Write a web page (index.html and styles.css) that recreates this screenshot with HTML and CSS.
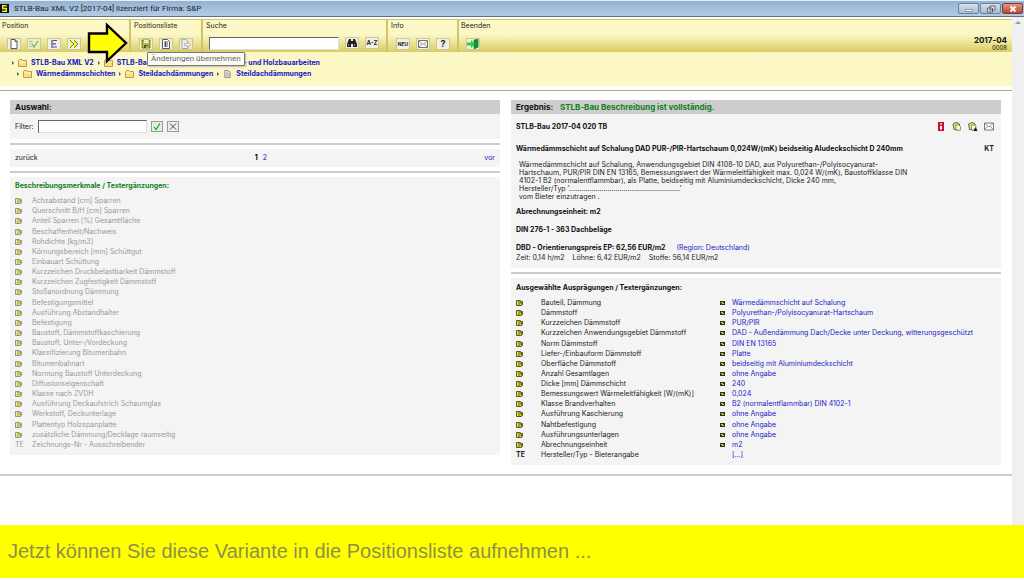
FILE: index.html
```html
<!DOCTYPE html>
<html lang="de">
<head>
    <meta charset="UTF-8">
    <meta name="viewport" content="width=device-width, initial-scale=1.0">
    <title>STLB-Bau XML V2</title>
    <link rel="stylesheet" href="styles.css">
</head>
<body>
    <svg class="defs" aria-hidden="true">
        <symbol id="folder" viewBox="0 0 9 8">
            <path d="M.5 7.500V1.500L1.500.5H4l1 1h3.500v6z" fill="#f6df86" stroke="#b08a2c" stroke-width=".8"/>
            <path d="M1.200 3h6.600" fill="none" stroke="#fff7c8"/>
        </symbol>
        <symbol id="sheet" viewBox="0 0 7 9">
            <path d="M.5.5h4l2 2v6h-6z" fill="#ddd" stroke="#888"/>
            <path d="M2 3.500h3M2 5h3M2 6.500h3" stroke="#999" stroke-width=".6"/>
        </symbol>
        <symbol id="item" viewBox="0 0 7 6">
            <path d="M.5.5h4v1h2v3h-1v1h-5z" fill="#e9e83a" stroke="#4a4a10" stroke-width=".9"/>
            <path d="M3 1v4M4.500 2.500h1v1h-1" fill="none" stroke="#33330a" stroke-width=".8"/>
        </symbol>
        <symbol id="mark" viewBox="0 0 5 4">
            <path d="M0 0h5v4H0z" fill="#2e3312"/>
            <path d="M1 1h2v1h1v1H2V2H1z" fill="#c9cf5a"/>
        </symbol>
        <symbol id="mail" viewBox="0 0 10 8">
            <path d="M.5.5h9v7h-9z" fill="#fff" stroke="#555" stroke-width=".8"/>
            <path d="M1 1l4 3.500L9 1M1 7l2.500-3M9 7L6.500 4" fill="none" stroke="#666" stroke-width=".7"/>
        </symbol>
        <symbol id="copy" viewBox="0 0 9 9">
            <path d="M.5 2L2.500 1l1-.6 2 .6L7 2v6L1.500 7.500z" fill="#e3dc62" stroke="#4b4b1c" stroke-width=".8"/>
            <path d="M3.500 3h3l1.500 1.500V8H3.500z" fill="#fbf9d8" stroke="#555" stroke-width=".6"/>
        </symbol>
    </svg>

    <header class="titlebar">
        <svg class="logo" viewBox="0 0 10 10"><path d="M0 0h10v10H0z" fill="#111"/><path d="M7.500 2H3v3h4v3H2.300" fill="none" stroke="#f4ee1c" stroke-width="1.600"/></svg>
        <h1>STLB-Bau XML V2 [2017-04] lizenziert für Firma: S&amp;P</h1>
        <div class="win-btns">
            <button type="button" aria-label="Minimieren"><svg viewBox="0 0 10 8"><path d="M1.500 4.500h7v2h-7z" fill="#fff" stroke="#667" stroke-width=".6"/></svg></button>
            <button type="button" aria-label="Verkleinern"><svg viewBox="0 0 10 8"><path d="M4 1h5v4H4zM1.500 3h5v4h-5z" fill="#eef3f9" stroke="#445" stroke-width=".8"/><path d="M3.300 4.500h1.500v1H3.300z" fill="#556"/></svg></button>
            <button type="button" class="close" aria-label="Schließen"><svg viewBox="0 0 10 8"><path d="M2.500 1.500l5 5m0-5l-5 5" stroke="#fff" stroke-width="1.800"/></svg></button>
        </div>
    </header>

    <div class="window">
        <div class="page">
            <div class="toolbar">
                <div class="group position">
                    <span>Position</span>
                    <div class="btns">
                        <button type="button" aria-label="Neu"><svg viewBox="0 0 12 10"><path d="M3 .5h4l2 2v7H3zM7 .5v2h2" fill="#fff" stroke="#333" stroke-width=".8"/></svg></button>
                        <button type="button" aria-label="Prüfen" class="off"><svg viewBox="0 0 12 10"><path d="M1.500 2.500h3M1.500 5h2M1.500 7.500h2" stroke="#9b9" /><path d="M4 5l2 3 4-6" fill="none" stroke="#6cb56c" stroke-width="1.300"/></svg></button>
                        <button type="button" aria-label="Struktur"><svg viewBox="0 0 12 10"><path d="M3 1h2v8H3z" fill="#88a"/><path d="M5 1.500h4M5 4.800h3M5 8h4" stroke="#4a4ab0" stroke-width="1.200"/></svg></button>
                        <button type="button" aria-label="Weiter"><svg viewBox="0 0 12 10"><path d="M2 1l4 4-4 4M6 1l4 4-4 4" fill="#eef03a" stroke="#6d8a1c"/></svg></button>
                    </div>
                    <svg class="pointer" viewBox="0 0 42 44"><path d="M2 12.500h18V4l19 18-19 18v-9H2z" fill="#ff0" stroke="#000" stroke-width="2.400"/></svg>
                </div>
                <div class="group liste">
                    <span>Positionsliste</span>
                    <div class="btns">
                        <button type="button" aria-label="Änderungen übernehmen"><svg viewBox="0 0 12 10"><path d="M2 1h8v8H2z" fill="#b5bd2c" stroke="#5c6414" stroke-width=".8"/><path d="M4 1h4.500v3H4z" fill="#eef0d0"/><path d="M4 6h4v3H4z" fill="#55601a"/><path d="M6.500 7h1v2h-1z" fill="#fff"/></svg></button>
                        <button type="button" aria-label="Liste"><svg viewBox="0 0 12 10"><path d="M2.500.5h5l2 2v7h-7z" fill="#fff" stroke="#333" stroke-width=".8"/><path d="M4 3h4M4 5h4M4 7h4M5.500 3v5" stroke="#333" stroke-width=".8"/></svg></button>
                        <button type="button" aria-label="Export" class="off"><svg viewBox="0 0 12 10"><path d="M2 .5h4l2 2v7H2z" fill="#eee" stroke="#999" stroke-width=".8"/><path d="M4.500 4.500h3V3L10.500 5.500 7.500 8V6.500h-3z" fill="#fff" stroke="#999" stroke-width=".7"/></svg></button>
                    </div>
                    <div class="tip" role="tooltip">Änderungen übernehmen</div>
                </div>
                <div class="group suche">
                    <label for="suche">Suche</label>
                    <div class="btns">
                        <input type="text" id="suche">
                        <button type="button" aria-label="Suchen"><svg viewBox="0 0 12 10"><path d="M3 1h2v2h2V1h2l2 5v3H7V6H5v3H1V6z" fill="#222"/><path d="M2.500 6v2M8.500 6v2" stroke="#aaa" stroke-width=".7"/></svg></button>
                        <button type="button" class="txt">A-Z</button>
                    </div>
                </div>
                <div class="group info">
                    <span>Info</span>
                    <div class="btns">
                        <button type="button" class="txt neu">NEU</button>
                        <button type="button" aria-label="Nachricht"><svg viewBox="0 0 12 10"><use href="#mail" x="1" y="1" width="10" height="8"/></svg></button>
                        <button type="button" class="txt help">?</button>
                    </div>
                </div>
                <div class="group ende">
                    <span>Beenden</span>
                    <div class="btns">
                        <button type="button" aria-label="Beenden"><svg viewBox="0 0 12 10"><path d="M7 1l4-.7v8L7 9.700z" fill="#149a2a" stroke="#0a5c16" stroke-width=".6"/><path d="M0 3.500h4V1L8 5 4 9V6.500H0z" fill="#22d43c"/></svg></button>
                    </div>
                    <div class="version"><b>2017-04</b><small>0008</small></div>
                </div>
            </div>

            <nav class="crumbs">
                <div>
                    <i></i><svg class="ic"><use href="#folder"/></svg><a href="#">STLB-Bau XML V2</a>
                    <i></i><svg class="ic"><use href="#folder"/></svg><a href="#">STLB-Bau 2017-04 - LB 016 - Zimmer- und Holzbauarbeiten</a>
                </div>
                <div class="sub">
                    <i></i><svg class="ic"><use href="#folder"/></svg><a href="#">Wärmedämmschichten</a>
                    <i></i><svg class="ic"><use href="#folder"/></svg><a href="#">Steildachdämmungen</a>
                    <i></i><svg class="ic"><use href="#sheet"/></svg><a href="#">Steildachdämmungen</a>
                </div>
            </nav>

            <main class="cols">
                <section class="auswahl">
                    <h2>Auswahl:</h2>
                    <form class="box filter">
                        <label for="filter">Filter:</label>
                        <input type="text" id="filter">
                        <button type="button" class="ok" aria-label="Filter anwenden"><svg viewBox="0 0 10 9"><path d="M2 5l2 2.500L8 1.500" fill="none" stroke="#1c9a2c" stroke-width="1.200"/></svg></button>
                        <button type="button" aria-label="Filter löschen"><svg viewBox="0 0 10 9"><path d="M2 1.500l6 6m0-6l-6 6" stroke="#333" stroke-width=".9"/></svg></button>
                    </form>
                    <hr>
                    <div class="box pager">
                        <span>zurück</span>
                        <span><b>1</b><a href="#">2</a></span>
                        <a href="#">vor</a>
                    </div>
                    <hr>
                    <div class="box merkmale">
                        <h3>Beschreibungsmerkmale / Textergänzungen:</h3>
                        <table>
                            <tr><td><svg><use href="#item"/></svg></td><td>Achsabstand [cm] Sparren</td></tr>
                            <tr><td><svg><use href="#item"/></svg></td><td>Querschnitt B/H [cm] Sparren</td></tr>
                            <tr><td><svg><use href="#item"/></svg></td><td>Anteil Sparren [%] Gesamtfläche</td></tr>
                            <tr><td><svg><use href="#item"/></svg></td><td>Beschaffenheit/Nachweis</td></tr>
                            <tr><td><svg><use href="#item"/></svg></td><td>Rohdichte [kg/m3]</td></tr>
                            <tr><td><svg><use href="#item"/></svg></td><td>Körnungsbereich [mm] Schüttgut</td></tr>
                            <tr><td><svg><use href="#item"/></svg></td><td>Einbauart Schüttung</td></tr>
                            <tr><td><svg><use href="#item"/></svg></td><td>Kurzzeichen Druckbelastbarkeit Dämmstoff</td></tr>
                            <tr><td><svg><use href="#item"/></svg></td><td>Kurzzeichen Zugfestigkeit Dämmstoff</td></tr>
                            <tr><td><svg><use href="#item"/></svg></td><td>Stoßanordnung Dämmung</td></tr>
                            <tr><td><svg><use href="#item"/></svg></td><td>Befestigungsmittel</td></tr>
                            <tr><td><svg><use href="#item"/></svg></td><td>Ausführung Abstandhalter</td></tr>
                            <tr><td><svg><use href="#item"/></svg></td><td>Befestigung</td></tr>
                            <tr><td><svg><use href="#item"/></svg></td><td>Baustoff, Dämmstoffkaschierung</td></tr>
                            <tr><td><svg><use href="#item"/></svg></td><td>Baustoff, Unter-/Vordeckung</td></tr>
                            <tr><td><svg><use href="#item"/></svg></td><td>Klassifizierung Bitumenbahn</td></tr>
                            <tr><td><svg><use href="#item"/></svg></td><td>Bitumenbahnart</td></tr>
                            <tr><td><svg><use href="#item"/></svg></td><td>Normung Baustoff Unterdeckung</td></tr>
                            <tr><td><svg><use href="#item"/></svg></td><td>Diffusionseigenschaft</td></tr>
                            <tr><td><svg><use href="#item"/></svg></td><td>Klasse nach ZVDH</td></tr>
                            <tr><td><svg><use href="#item"/></svg></td><td>Ausführung Deckaufstrich Schaumglas</td></tr>
                            <tr><td><svg><use href="#item"/></svg></td><td>Werkstoff, Deckunterlage</td></tr>
                            <tr><td><svg><use href="#item"/></svg></td><td>Plattentyp Holzspanplatte</td></tr>
                            <tr><td><svg><use href="#item"/></svg></td><td>zusätzliche Dämmung/Decklage raumseitig</td></tr>
                            <tr><td>TE</td><td>Zeichnungs-Nr - Ausschreibender</td></tr>
                        </table>
                    </div>
                </section>

                <section class="ergebnis">
                    <h2>Ergebnis: <span>STLB-Bau Beschreibung ist vollständig.</span></h2>
                    <div class="box result">
                        <div class="line">
                            <h3>STLB-Bau 2017-04 020 TB</h3>
                            <div class="tools">
                                <svg viewBox="0 0 10 9"><path d="M2 0h6v9H2z" fill="#c8102e"/><path d="M4.200 1.200h1.600v1.600H4.200zM4 4h2v3.500H4z" fill="#fff"/></svg>
                                <svg><use href="#copy"/></svg>
                                <svg viewBox="0 0 10 9"><use href="#copy" width="9" height="9"/><path d="M5.500 9L7.500 5l2 4z" fill="#111"/></svg>
                                <svg><use href="#mail"/></svg>
                            </div>
                        </div>
                        <div class="line kurz">
                            <h3>Wärmedämmschicht auf Schalung DAD PUR-/PIR-Hartschaum 0,024W/(mK) beidseitig Aludeckschicht D 240mm</h3>
                            <b>KT</b>
                        </div>
                        <p class="lang">
                            Wärmedämmschicht auf Schalung, Anwendungsgebiet DIN 4108-10 DAD, aus Polyurethan-/Polyisocyanurat-<br>
                            Hartschaum, PUR/PIR DIN EN 13165, Bemessungswert der Wärmeleitfähigkeit max. 0,024 W/(mK), Baustoffklasse DIN<br>
                            4102-1 B2 (normalentflammbar), als Platte, beidseitig mit Aluminiumdeckschicht, Dicke 240 mm,<br>
                            Hersteller/Typ '.......................................................'<br>
                            vom Bieter einzutragen .
                        </p>
                        <h3>Abrechnungseinheit: m2</h3>
                        <h3>DIN 276-1 - 363 Dachbeläge</h3>
                        <div class="preis">
                            <h3>DBD - Orientierungspreis EP: 62,56 EUR/m2</h3>
                            <a href="#">(Region: Deutschland)</a>
                        </div>
                        <div class="zeit"><span>Zeit: 0,14 h/m2</span><span>Löhne: 6,42 EUR/m2</span><span>Stoffe: 56,14 EUR/m2</span></div>
                    </div>
                    <hr>
                    <div class="box werte">
                        <h3>Ausgewählte Ausprägungen / Textergänzungen:</h3>
                        <table>
                            <tr><td><svg><use href="#item"/></svg></td><td>Bauteil, Dämmung</td><td><svg><use href="#mark"/></svg></td><td><a href="#">Wärmedämmschicht auf Schalung</a></td></tr>
                            <tr><td><svg><use href="#item"/></svg></td><td>Dämmstoff</td><td><svg><use href="#mark"/></svg></td><td><a href="#">Polyurethan-/Polyisocyanurat-Hartschaum</a></td></tr>
                            <tr><td><svg><use href="#item"/></svg></td><td>Kurzzeichen Dämmstoff</td><td><svg><use href="#mark"/></svg></td><td><a href="#">PUR/PIR</a></td></tr>
                            <tr><td><svg><use href="#item"/></svg></td><td>Kurzzeichen Anwendungsgebiet Dämmstoff</td><td><svg><use href="#mark"/></svg></td><td><a href="#">DAD - Außendämmung Dach/Decke unter Deckung, witterungsgeschützt</a></td></tr>
                            <tr><td><svg><use href="#item"/></svg></td><td>Norm Dämmstoff</td><td><svg><use href="#mark"/></svg></td><td><a href="#">DIN EN 13165</a></td></tr>
                            <tr><td><svg><use href="#item"/></svg></td><td>Liefer-/Einbauform Dämmstoff</td><td><svg><use href="#mark"/></svg></td><td><a href="#">Platte</a></td></tr>
                            <tr><td><svg><use href="#item"/></svg></td><td>Oberfläche Dämmstoff</td><td><svg><use href="#mark"/></svg></td><td><a href="#">beidseitig mit Aluminiumdeckschicht</a></td></tr>
                            <tr><td><svg><use href="#item"/></svg></td><td>Anzahl Gesamtlagen</td><td><svg><use href="#mark"/></svg></td><td><a href="#">ohne Angabe</a></td></tr>
                            <tr><td><svg><use href="#item"/></svg></td><td>Dicke [mm] Dämmschicht</td><td><svg><use href="#mark"/></svg></td><td><a href="#">240</a></td></tr>
                            <tr><td><svg><use href="#item"/></svg></td><td>Bemessungswert Wärmeleitfähigkeit [W/(mK)]</td><td><svg><use href="#mark"/></svg></td><td><a href="#">0,024</a></td></tr>
                            <tr><td><svg><use href="#item"/></svg></td><td>Klasse Brandverhalten</td><td><svg><use href="#mark"/></svg></td><td><a href="#">B2 (normalentflammbar) DIN 4102-1</a></td></tr>
                            <tr><td><svg><use href="#item"/></svg></td><td>Ausführung Kaschierung</td><td><svg><use href="#mark"/></svg></td><td><a href="#">ohne Angabe</a></td></tr>
                            <tr><td><svg><use href="#item"/></svg></td><td>Nahtbefestigung</td><td><svg><use href="#mark"/></svg></td><td><a href="#">ohne Angabe</a></td></tr>
                            <tr><td><svg><use href="#item"/></svg></td><td>Ausführungsunterlagen</td><td><svg><use href="#mark"/></svg></td><td><a href="#">ohne Angabe</a></td></tr>
                            <tr><td><svg><use href="#item"/></svg></td><td>Abrechnungseinheit</td><td><svg><use href="#mark"/></svg></td><td><a href="#">m2</a></td></tr>
                            <tr><td>TE</td><td>Hersteller/Typ - Bieterangabe</td><td></td><td><a href="#">[...]</a></td></tr>
                        </table>
                    </div>
                </section>
            </main>
            <hr class="end">
        </div>
        <div class="scroll"><svg viewBox="0 0 12 8"><path d="M3 6l3-3 3 3z" fill="#999"/></svg></div>
    </div>

    <footer class="hint">Jetzt können Sie diese Variante in die Positionsliste aufnehmen ...</footer>
</body>
</html>
```
FILE: styles.css
```css
* {
    box-sizing: border-box;
}
body {
    margin: 0;
    min-height: 100vh;
    display: flex;
    flex-direction: column;
    padding-bottom: 2px;
    background: #fff;
    font: 7px/10px Inter, "DejaVu Sans", sans-serif;
    color: #222;
}
h1, h2, h3, p {
    margin: 0;
    font-size: 7px;
}
a {
    color: #1a1ac8;
    text-decoration: none;
}
svg {
    display: block;
}
button, input {
    margin: 0;
    padding: 0;
    font: inherit;
}
input {
    background: #fff;
    border: 1px solid #ddd;
    border-top-color: #666;
    border-left-color: #666;
}
hr {
    margin: 4px 0;
    border: 0;
    height: 2px;
    background: #ccc;
}
.defs {
    position: absolute;
    width: 0;
    height: 0;
}

/* Titelleiste */
.titlebar {
    display: flex;
    align-items: center;
    height: 17px;
    border-top: 1px solid #e4eef8;
    border-bottom: 1px solid #62717f;
    background: linear-gradient(#93b2d3, #b3cce6);
}
.titlebar h1 {
    flex: 1;
    margin-left: 5px;
    font: 8px/12px Roboto, sans-serif;
    color: #222;
}
.logo {
    width: 9px;
    height: 11px;
}
.win-btns {
    display: flex;
    align-self: flex-start;
    gap: 1px;
    margin-right: 1px;
    padding-top: 2px;
}
.win-btns button {
    width: 21px;
    height: 11px;
    border: 1px solid #6f8294;
    border-radius: 2px;
    background: linear-gradient(#d3e0ee, #a9bdd2);
}
.win-btns .close {
    border-color: #7c3a30;
    background: linear-gradient(#e09a8a, #c8402a);
}
.win-btns svg {
    height: 8px;
    margin: 0 auto;
}

.window {
    flex: 1;
    display: flex;
}
.page {
    flex: 1;
    padding-top: 2px;
}
.scroll {
    width: 12px;
    padding-top: 1px;
    background: #f0f0f0;
}

/* Werkzeugleiste */
.toolbar {
    display: flex;
    height: 33px;
    border-top: 1px solid #cfc56a;
    background: linear-gradient(#fcf8c6 45%, #d9cd62);
}
.group {
    position: relative;
    display: flex;
    flex-direction: column;
    justify-content: space-between;
    padding: 1px 0 2px 7px;
    border-right: 2px solid #cfc36c;
}
.group > span, .group > label {
    margin-left: -5px;
}
.btns {
    display: flex;
    gap: 6px;
}
.btns button {
    width: 14px;
    height: 12px;
    border: 1px solid #c9c7a0;
    background: #f2f1e2;
}
.btns svg {
    width: 12px;
    height: 10px;
}
.btns .off {
    background: #eeebc0;
}
.btns .txt {
    font-size: 6px;
    line-height: 10px;
    font-weight: bold;
    color: #222;
}
.btns .neu {
    font-size: 5px;
}
.btns .help {
    font-size: 9px;
}
.position {
    width: 131px;
}
.liste {
    width: 72px;
}
.liste, .info {
    padding-left: 8px;
}
.suche {
    width: 185px;
    padding-left: 6px;
}
.suche label {
    margin-left: -3px;
}
.suche input {
    width: 130px;
    height: 13px;
}
.info {
    width: 71px;
}
.ende {
    flex: 1;
    border-right: 0;
}
.version {
    position: absolute;
    right: 5px;
    bottom: 0;
    text-align: right;
    line-height: 8px;
    color: #111;
}
.version b, .version small {
    display: block;
}
.version b {
    font-size: 8px;
}
.version small {
    font-size: 6px;
}
.pointer {
    position: absolute;
    z-index: 2;
    left: 87px;
    top: 1px;
    width: 42px;
    height: 44px;
}
.tip {
    position: absolute;
    z-index: 3;
    left: 16px;
    top: 32px;
    padding: 0 3px;
    border: 1px solid #777;
    border-radius: 1px;
    background: #fbfbf6;
    box-shadow: 1px 1px 2px #8888;
    font: 8px/12px Roboto, sans-serif;
    white-space: nowrap;
    color: #666;
}

.crumbs {
    height: 38px;
    padding: 5px 0 0 12px;
    background: #fcf8c6;
    border-bottom: 4px solid #fff;
    font-weight: bold;
    line-height: 11px;
}
.crumbs div {
    display: flex;
    align-items: center;
}
.crumbs .sub {
    padding-left: 5px;
}
.crumbs i {
    margin-right: 4px;
    border: 1px solid transparent;
    border-width: 2px 0 2px 2px;
    border-left-color: #555;
}
.crumbs a {
    margin: 0 4px;
    color: #1414c8;
}
.crumbs .ic {
    width: 9px;
    height: 8px;
}

/* Spalten */
.cols {
    display: grid;
    grid-template-columns: 1fr 1fr;
    align-items: start;
    gap: 11px;
    padding: 9px 11px 0 10px;
    border-top: 1px solid #b5ab60;
}
.cols h2 {
    padding-left: 5px;
    background: #cdcdcd;
    font-size: 8px;
    line-height: 14px;
    color: #111;
}
.cols h3 {
    color: #111;
}
.cols h2 span {
    margin-left: 5px;
    color: #118022;
}
.box {
    padding: 0 5px;
    background: #f4f4f4;
}
.filter {
    display: flex;
    align-items: center;
    height: 25px;
}
.filter input {
    width: 109px;
    height: 13px;
    margin: 0 4px;
}
.filter button {
    width: 12px;
    height: 11px;
    margin-right: 4px;
    border: 1px solid #999;
    background: #eee;
}
.filter .ok {
    background: #dff2dc;
}
.pager {
    display: flex;
    justify-content: space-between;
    padding: 4px 5px;
}
.pager b {
    margin-right: 5px;
    color: #000;
}
.merkmale {
    padding-top: 4px;
    padding-bottom: 5px;
}
.cols .merkmale h3 {
    color: #118022;
}
table {
    border-collapse: collapse;
}
td {
    padding: 0;
    line-height: 10px;
}
td svg {
    width: 7px;
    height: 6px;
}
td:first-child {
    width: 17px;
    font-weight: bold;
}
.merkmale table {
    height: 254px;
    margin-top: 5px;
    color: #999;
}
.merkmale svg {
    opacity: .6;
}
.merkmale td:first-child {
    font-weight: normal;
}

/* Ergebnis */
.result {
    padding-top: 8px;
    padding-bottom: 5px;
}
.line {
    display: flex;
    justify-content: space-between;
    padding-right: 2px;
}
.tools {
    display: flex;
    gap: 6px;
}
.tools svg {
    width: 10px;
    height: 9px;
}
.kurz {
    margin: 12px 0 7px;
}
.lang {
    margin-bottom: 6px;
    padding-left: 3px;
    line-height: 8px;
}
.result > h3 {
    margin-bottom: 8px;
}
.preis {
    display: flex;
    gap: 11px;
}
.zeit {
    display: flex;
    gap: 8px;
}
.werte {
    padding-top: 5px;
    padding-bottom: 5px;
}
.werte table {
    width: 100%;
    height: 162px;
    margin-top: 5px;
    table-layout: fixed;
}
.werte td:nth-child(1) {
    width: 25px;
}
.werte td:nth-child(2) {
    width: 179px;
}
.werte td:nth-child(3) {
    width: 12px;
}
.werte td:nth-child(3) svg {
    width: 5px;
    height: 4px;
}
.end {
    margin: 9px 0 0;
}

.hint {
    padding: 0 8px;
    background: #ff0;
    font: 20px/53px "Liberation Sans", sans-serif;
    color: #8f8f4a;
}
```
